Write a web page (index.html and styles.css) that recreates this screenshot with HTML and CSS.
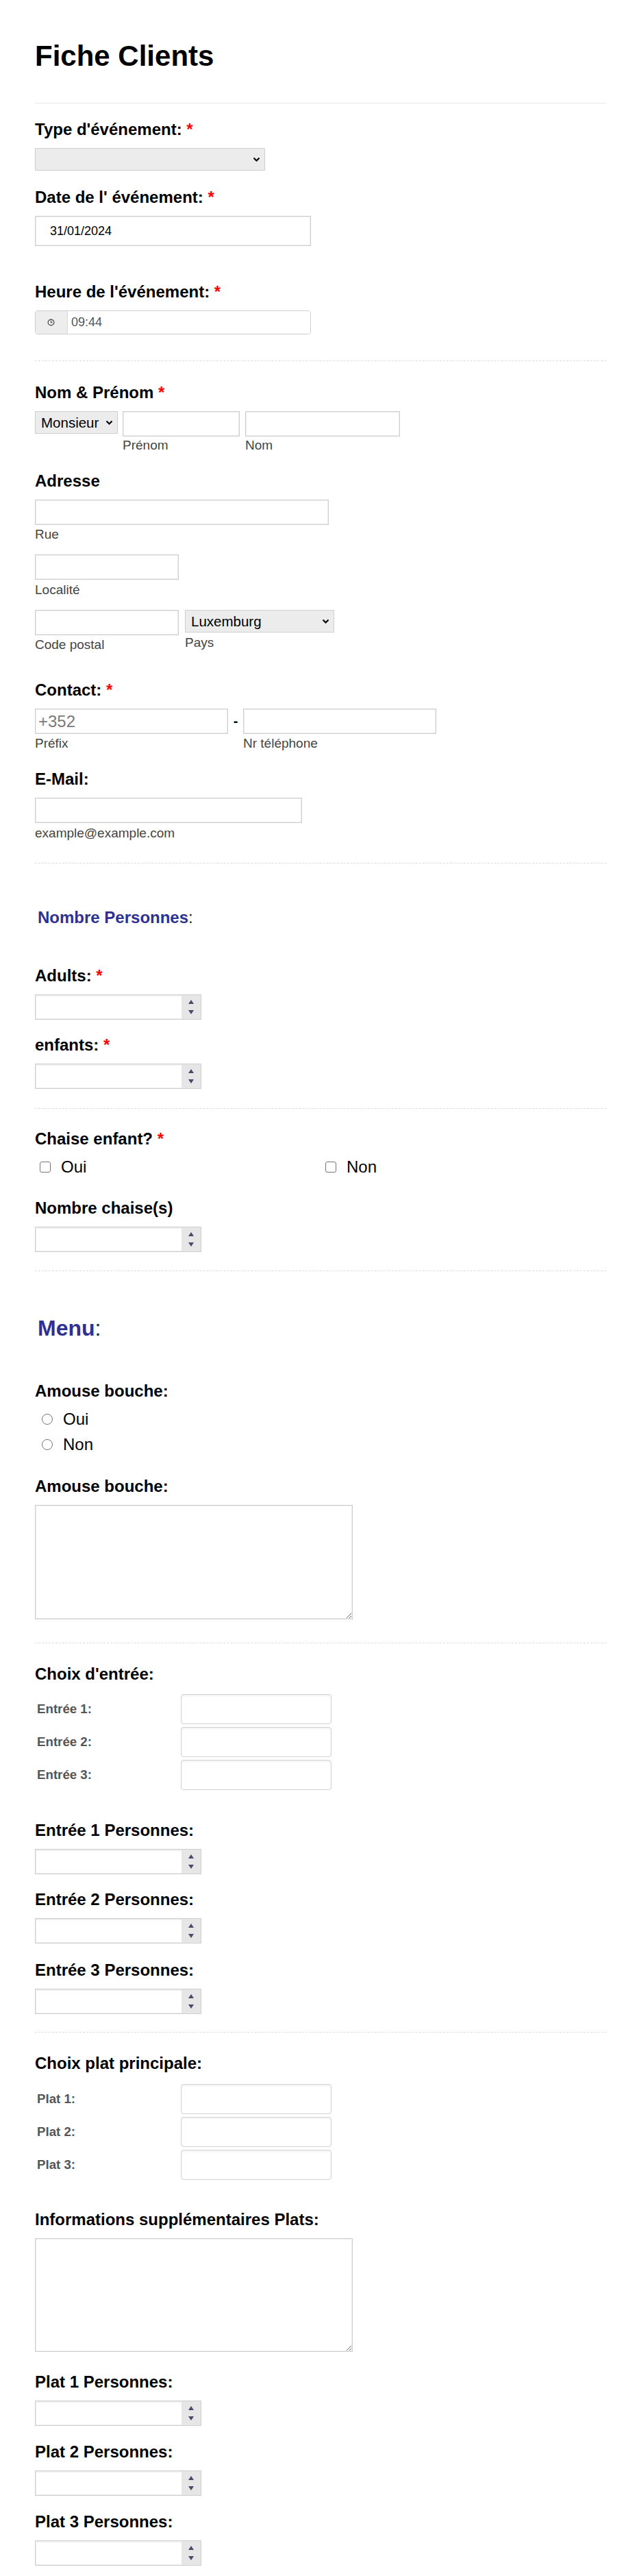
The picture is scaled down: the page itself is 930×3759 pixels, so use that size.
FILE: index.html
```html
<!DOCTYPE html>
<html lang="fr">
<head>
<meta charset="utf-8">
<title>Fiche Clients</title>
<link rel="stylesheet" href="styles.css">
</head>
<body>
<main class="form">
  <h1 class="title">Fiche Clients</h1>
  <div class="rule rule-solid"></div>

  <div class="field mt24">
    <label class="lbl">Type d'événement:<span class="req"> *</span></label>
    <span class="selwrap">
      <select class="sel w-type"><option></option></select>
      <svg class="chev" width="11" height="8" viewBox="0 0 11 8"><path d="M1.5 1.5 L5.5 5.5 L9.5 1.5" fill="none" stroke="#000" stroke-width="2.2"/></svg>
    </span>
  </div>

  <div class="field mt25">
    <label class="lbl">Date de l' événement:<span class="req"> *</span></label>
    <input class="inp date" type="text" value="31/01/2024">
  </div>

  <div class="field mt53">
    <label class="lbl">Heure de l'événement:<span class="req"> *</span></label>
    <div class="time">
      <span class="time-ico"><svg width="11" height="11" viewBox="0 0 11 11"><circle cx="5.5" cy="5.5" r="4.3" fill="none" stroke="#555" stroke-width="1.4"/><path d="M5.5 2.8 V5.7 H7.6" fill="none" stroke="#555" stroke-width="1.2"/></svg></span>
      <input class="time-inp" type="text" value="09:44">
    </div>
  </div>

  <div class="rule mt38"></div>

  <div class="field mt32">
    <label class="lbl">Nom &amp; Prénom<span class="req"> *</span></label>
    <div class="row gap7">
      <span class="selwrap">
        <select class="sel w-civ"><option>Monsieur</option></select>
        <svg class="chev" width="11" height="8" viewBox="0 0 11 8"><path d="M1.5 1.5 L5.5 5.5 L9.5 1.5" fill="none" stroke="#000" stroke-width="2.2"/></svg>
      </span>
      <div class="col">
        <input class="inp w-prenom" type="text">
        <span class="sub sub-tight">Prénom</span>
      </div>
      <div class="col ml1">
        <input class="inp w-nom" type="text">
        <span class="sub sub-tight">Nom</span>
      </div>
    </div>
  </div>

  <div class="field mt27">
    <label class="lbl">Adresse</label>
    <input class="inp w-rue" type="text">
    <span class="sub">Rue</span>
    <input class="inp w-loc mt18" type="text">
    <span class="sub sub-loose">Localité</span>
    <div class="row gap9 mt18">
      <div class="col">
        <input class="inp w-loc" type="text">
        <span class="sub">Code postal</span>
      </div>
      <div class="col">
        <span class="selwrap">
          <select class="sel w-pays"><option>Luxemburg</option></select>
          <svg class="chev" width="11" height="8" viewBox="0 0 11 8"><path d="M1.5 1.5 L5.5 5.5 L9.5 1.5" fill="none" stroke="#000" stroke-width="2.2"/></svg>
        </span>
        <span class="sub sub-loose">Pays</span>
      </div>
    </div>
  </div>

  <div class="field mt41">
    <label class="lbl">Contact:<span class="req"> *</span></label>
    <div class="row">
      <div class="col">
        <input class="inp w-tel prefix" type="text" placeholder="+352">
        <span class="sub">Préfix</span>
      </div>
      <span class="dash">-</span>
      <div class="col">
        <input class="inp w-tel" type="text">
        <span class="sub">Nr téléphone</span>
      </div>
    </div>
  </div>

  <div class="field mt27">
    <label class="lbl">E-Mail:</label>
    <input class="inp w-mail" type="text">
    <span class="sub sub-loose">example@example.com</span>
  </div>

  <div class="rule mt32"></div>

  <h2 class="section mt65">Nombre Personnes<span class="colon">:</span></h2>

  <div class="field mt57">
    <label class="lbl">Adults:<span class="req"> *</span></label>
    <div class="num"><input type="text"><span class="spin"><svg width="8" height="6" viewBox="0 0 8 6"><path d="M4 0 L8 6 H0 Z" fill="#4a4a68"/></svg><svg width="8" height="6" viewBox="0 0 8 6"><path d="M0 0 H8 L4 6 Z" fill="#4a4a68"/></svg></span></div>
  </div>

  <div class="field mt23">
    <label class="lbl">enfants:<span class="req"> *</span></label>
    <div class="num"><input type="text"><span class="spin"><svg width="8" height="6" viewBox="0 0 8 6"><path d="M4 0 L8 6 H0 Z" fill="#4a4a68"/></svg><svg width="8" height="6" viewBox="0 0 8 6"><path d="M0 0 H8 L4 6 Z" fill="#4a4a68"/></svg></span></div>
  </div>

  <div class="rule mt28"></div>

  <div class="field mt30">
    <label class="lbl">Chaise enfant?<span class="req"> *</span></label>
    <div class="opts">
      <label class="opt"><input type="checkbox" class="box">Oui</label>
      <label class="opt"><input type="checkbox" class="box">Non</label>
    </div>
  </div>

  <div class="field mt32">
    <label class="lbl">Nombre chaise(s)</label>
    <div class="num"><input type="text"><span class="spin"><svg width="8" height="6" viewBox="0 0 8 6"><path d="M4 0 L8 6 H0 Z" fill="#4a4a68"/></svg><svg width="8" height="6" viewBox="0 0 8 6"><path d="M0 0 H8 L4 6 Z" fill="#4a4a68"/></svg></span></div>
  </div>

  <div class="rule mt27"></div>

  <h2 class="section big mt65">Menu<span class="colon">:</span></h2>

  <div class="field mt60">
    <label class="lbl">Amouse bouche:</label>
    <label class="radio-row"><input type="radio" name="ab" class="rad">Oui</label>
    <label class="radio-row mt9"><input type="radio" name="ab" class="rad">Non</label>
  </div>

  <div class="field mt33">
    <label class="lbl">Amouse bouche:</label>
    <textarea class="ta"></textarea>
  </div>

  <div class="rule mt34"></div>

  <div class="field mt31">
    <label class="lbl lbl-matrix">Choix d'entrée:</label>
    <div class="matrix">
      <div class="mrow"><span class="mlabel">Entrée 1:</span><input class="mbox" type="text"></div>
      <div class="mrow"><span class="mlabel">Entrée 2:</span><input class="mbox" type="text"></div>
      <div class="mrow"><span class="mlabel">Entrée 3:</span><input class="mbox" type="text"></div>
    </div>
  </div>

  <div class="field mt45">
    <label class="lbl">Entrée 1 Personnes:</label>
    <div class="num"><input type="text"><span class="spin"><svg width="8" height="6" viewBox="0 0 8 6"><path d="M4 0 L8 6 H0 Z" fill="#4a4a68"/></svg><svg width="8" height="6" viewBox="0 0 8 6"><path d="M0 0 H8 L4 6 Z" fill="#4a4a68"/></svg></span></div>
  </div>

  <div class="field mt23">
    <label class="lbl">Entrée 2 Personnes:</label>
    <div class="num"><input type="text"><span class="spin"><svg width="8" height="6" viewBox="0 0 8 6"><path d="M4 0 L8 6 H0 Z" fill="#4a4a68"/></svg><svg width="8" height="6" viewBox="0 0 8 6"><path d="M0 0 H8 L4 6 Z" fill="#4a4a68"/></svg></span></div>
  </div>

  <div class="field mt25">
    <label class="lbl">Entrée 3 Personnes:</label>
    <div class="num"><input type="text"><span class="spin"><svg width="8" height="6" viewBox="0 0 8 6"><path d="M4 0 L8 6 H0 Z" fill="#4a4a68"/></svg><svg width="8" height="6" viewBox="0 0 8 6"><path d="M0 0 H8 L4 6 Z" fill="#4a4a68"/></svg></span></div>
  </div>

  <div class="rule mt26"></div>

  <div class="field mt31">
    <label class="lbl lbl-matrix2">Choix plat principale:</label>
    <div class="matrix">
      <div class="mrow"><span class="mlabel">Plat 1:</span><input class="mbox" type="text"></div>
      <div class="mrow"><span class="mlabel">Plat 2:</span><input class="mbox" type="text"></div>
      <div class="mrow"><span class="mlabel">Plat 3:</span><input class="mbox" type="text"></div>
    </div>
  </div>

  <div class="field mt44">
    <label class="lbl">Informations supplémentaires Plats:</label>
    <textarea class="ta ta2"></textarea>
  </div>

  <div class="field mt30">
    <label class="lbl">Plat 1 Personnes:</label>
    <div class="num"><input type="text"><span class="spin"><svg width="8" height="6" viewBox="0 0 8 6"><path d="M4 0 L8 6 H0 Z" fill="#4a4a68"/></svg><svg width="8" height="6" viewBox="0 0 8 6"><path d="M0 0 H8 L4 6 Z" fill="#4a4a68"/></svg></span></div>
  </div>

  <div class="field mt24">
    <label class="lbl">Plat 2 Personnes:</label>
    <div class="num"><input type="text"><span class="spin"><svg width="8" height="6" viewBox="0 0 8 6"><path d="M4 0 L8 6 H0 Z" fill="#4a4a68"/></svg><svg width="8" height="6" viewBox="0 0 8 6"><path d="M0 0 H8 L4 6 Z" fill="#4a4a68"/></svg></span></div>
  </div>

  <div class="field mt24">
    <label class="lbl">Plat 3 Personnes:</label>
    <div class="num"><input type="text"><span class="spin"><svg width="8" height="6" viewBox="0 0 8 6"><path d="M4 0 L8 6 H0 Z" fill="#4a4a68"/></svg><svg width="8" height="6" viewBox="0 0 8 6"><path d="M0 0 H8 L4 6 Z" fill="#4a4a68"/></svg></span></div>
  </div>
</main>
</body>
</html>
```

FILE: styles.css
```css
* { box-sizing: border-box; }
html, body { margin: 0; padding: 0; background: #fff; }
body {
  font-family: "Liberation Sans", Arial, Helvetica, sans-serif;
  color: #000;
}
.form {
  width: 930px;
  padding: 58px 45px 15px 51px;
}
.title {
  margin: 0;
  font-size: 42px;
  line-height: 48px;
  font-weight: bold;
  color: #000;
}
.rule { height: 0; border-top: 1px dashed #dddddd; }
.rule-solid { border-top: 1px solid #e8e8e8; margin-top: 44px; }

.field { display: block; }
.lbl {
  display: block;
  font-size: 24px;
  line-height: 28px;
  font-weight: bold;
  color: #000;
  margin-bottom: 13px;
}
.lbl-matrix { margin-bottom: 15px; }
.lbl-matrix2 { margin-bottom: 16px; }
.req { color: #ff0000; font-weight: bold; }

.section {
  margin-bottom: 0;
  padding-left: 4px;
  font-size: 24px;
  line-height: 28px;
  font-weight: bold;
  color: #2e3192;
}
.section.big { font-size: 32px; line-height: 36px; }
.section .colon { color: #222; font-weight: normal; }

.row { display: flex; align-items: flex-start; }
.col { display: flex; flex-direction: column; }
.gap7 { gap: 7px; }
.gap9 { gap: 9px; }
.ml1 { margin-left: 1px; }

.inp {
  display: block;
  height: 37px;
  margin: 0;
  padding: 0 6px;
  border: 1px solid #cfcfcf;
  box-shadow: inset 0 0 0 1px #ececec;
  background: #fff;
  font-family: inherit;
  font-size: 18px;
  color: #000;
  outline: none;
  border-radius: 0;
}
.w-prenom { width: 171px; }
.w-nom { width: 226px; }
.w-rue { width: 429px; }
.w-loc { width: 210px; }
.w-tel { width: 282px; }
.w-mail { width: 390px; }
.prefix { font-size: 24px; padding-left: 4px; }
.prefix::placeholder { color: #7a7a7a; }

.date { width: 403px; height: 44px; padding-left: 21px; font-size: 18px; }

.selwrap { position: relative; display: inline-block; }
.sel {
  -webkit-appearance: none;
  appearance: none;
  display: block;
  height: 33px;
  margin: 0;
  padding: 0 26px 0 8px;
  border: 1px solid #cfcfcf;
  border-radius: 0;
  background: #ececec;
  font-family: inherit;
  font-size: 20.5px;
  color: #000;
  outline: none;
}
.w-type { width: 336px; }
.w-civ { width: 121px; }
.w-pays { width: 218px; }
.chev {
  position: absolute;
  right: 7px;
  top: 50%;
  margin-top: -4px;
  pointer-events: none;
}

.sub {
  display: block;
  margin-top: 3px;
  font-size: 19px;
  line-height: 22px;
  color: #444;
}
.sub-tight { margin-top: 2px; }
.sub-loose { margin-top: 4px; }

.dash {
  width: 22px;
  height: 37px;
  line-height: 37px;
  text-align: center;
  font-size: 20px;
  font-weight: bold;
}

.time {
  display: flex;
  width: 403px;
  height: 35px;
  border: 1px solid #cfcfcf;
  border-radius: 4px;
  overflow: hidden;
  background: #fff;
}
.time-ico {
  width: 47px;
  flex: none;
  display: flex;
  align-items: center;
  padding-left: 17px;
  background: #ededed;
  border-right: 1px solid #d9d9d9;
}
.time-inp {
  flex: 1;
  min-width: 0;
  border: 0;
  margin: 0;
  padding: 0 0 0 5px;
  font-family: inherit;
  font-size: 18px;
  color: #555;
  outline: none;
  background: #fff;
}

.num {
  display: flex;
  width: 243px;
  height: 37px;
  border: 1px solid #cfcfcf;
  box-shadow: inset 0 0 0 1px #ececec;
  background: #fff;
}
.num input {
  flex: 1;
  min-width: 0;
  border: 0;
  border-top: 1px solid #f0f0f0;
  margin: 1px 0 1px 1px;
  padding: 0 6px;
  font-family: inherit;
  font-size: 18px;
  outline: none;
  background: #fff;
}
.spin {
  width: 28px;
  flex: none;
  display: flex;
  flex-direction: column;
  align-items: center;
  justify-content: center;
  gap: 9px;
  background: #e6e6e6;
}
.spin svg { display: block; }

.opts { display: flex; }
.opt {
  width: 50%;
  display: flex;
  align-items: center;
  padding-left: 7px;
  font-size: 24px;
  line-height: 28px;
}
.box {
  -webkit-appearance: none;
  appearance: none;
  width: 16px;
  height: 16px;
  margin: 0 15px 0 0;
  border: 1px solid #767676;
  border-radius: 3px;
  background: #fff;
}

.radio-row {
  display: flex;
  align-items: center;
  padding-left: 10px;
  font-size: 24px;
  line-height: 28px;
}
.rad {
  -webkit-appearance: none;
  appearance: none;
  width: 16px;
  height: 16px;
  margin: 0 15px 0 0;
  border: 1px solid #767676;
  border-radius: 50%;
  background: #fff;
}

.ta {
  display: block;
  width: 464px;
  height: 167px;
  margin: 0;
  padding: 4px 6px;
  border: 1px solid #cfcfcf;
  box-shadow: inset 0 0 0 1px #ececec;
  font-family: inherit;
  font-size: 18px;
  outline: none;
  border-radius: 0;
}
.ta2 { height: 166px; }

.matrix { display: flex; flex-direction: column; gap: 4px; }
.mrow { display: flex; align-items: center; height: 44px; }
.mlabel {
  width: 213px;
  padding-left: 3px;
  font-size: 18.7px;
  font-weight: bold;
  color: #555;
}
.mbox {
  width: 220px;
  height: 44px;
  margin: 0;
  border: 1px solid #d3d3d3;
  border-radius: 4px;
  box-shadow: inset 0 2px 3px rgba(0, 0, 0, 0.06);
  background: #fff;
  outline: none;
  font-family: inherit;
  font-size: 18px;
}

.mt9 { margin-top: 9px; }
.mt18 { margin-top: 18px; }
.mt23 { margin-top: 23px; }
.mt24 { margin-top: 24px; }
.mt25 { margin-top: 25px; }
.mt26 { margin-top: 26px; }
.mt27 { margin-top: 27px; }
.mt28 { margin-top: 28px; }
.mt30 { margin-top: 30px; }
.mt31 { margin-top: 31px; }
.mt32 { margin-top: 32px; }
.mt33 { margin-top: 33px; }
.mt34 { margin-top: 34px; }
.mt38 { margin-top: 38px; }
.mt41 { margin-top: 41px; }
.mt44 { margin-top: 44px; }
.mt45 { margin-top: 45px; }
.mt53 { margin-top: 53px; }
.mt57 { margin-top: 57px; }
.mt60 { margin-top: 60px; }
.mt65 { margin-top: 65px; }
```
